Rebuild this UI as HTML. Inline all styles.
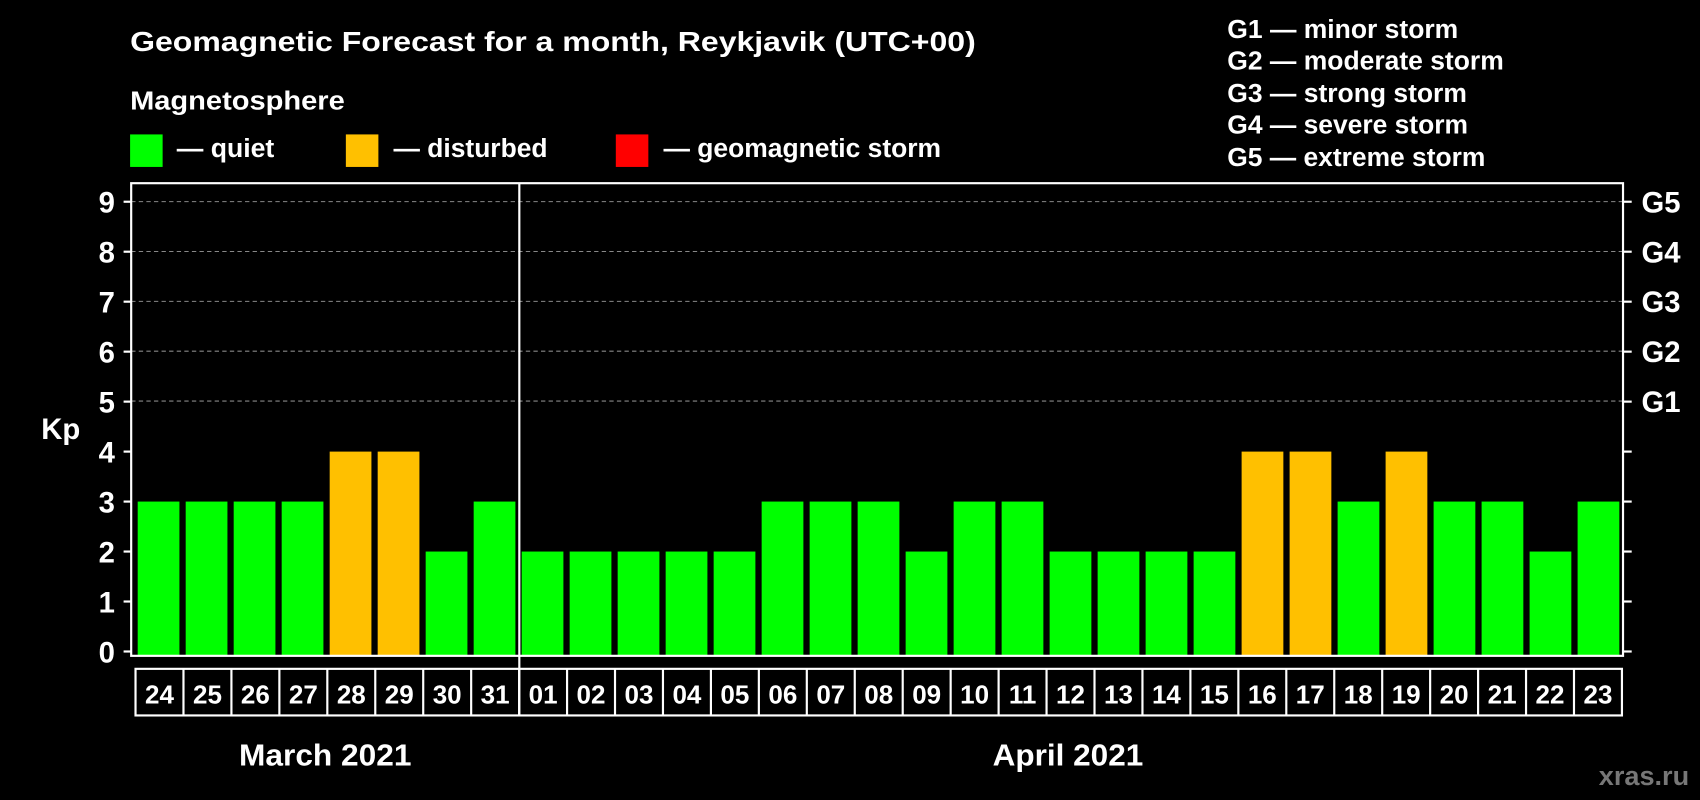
<!DOCTYPE html>
<html><head><meta charset="utf-8"><style>
html,body{margin:0;padding:0;background:#000;width:1700px;height:800px;overflow:hidden}
svg{display:block}
text{font-family:"Liberation Sans",Arial,sans-serif;font-weight:bold;fill:#fff}
</style></head><body>
<svg width="1700" height="800" viewBox="0 0 1568 738" preserveAspectRatio="none" xmlns="http://www.w3.org/2000/svg">
<rect width="1568" height="738" fill="#000"/>
<text x="120" y="47" font-size="26" textLength="780" lengthAdjust="spacingAndGlyphs">Geomagnetic Forecast for a month, Reykjavik (UTC+00)</text>
<text x="120" y="101" font-size="24" textLength="198" lengthAdjust="spacingAndGlyphs">Magnetosphere</text>
<rect x="120" y="124" width="30" height="30" fill="#00ff00"/>
<text x="163" y="145" font-size="24" textLength="90" lengthAdjust="spacingAndGlyphs">— quiet</text>
<rect x="319" y="124" width="30" height="30" fill="#ffc000"/>
<text x="363" y="145" font-size="24" textLength="142" lengthAdjust="spacingAndGlyphs">— disturbed</text>
<rect x="568" y="124" width="30" height="30" fill="#ff0000"/>
<text x="612" y="145" font-size="24" textLength="256" lengthAdjust="spacingAndGlyphs">— geomagnetic storm</text>
<g font-size="24">
<text x="1132" y="35" textLength="213" lengthAdjust="spacingAndGlyphs">G1 — minor storm</text>
<text x="1132" y="64" textLength="255" lengthAdjust="spacingAndGlyphs">G2 — moderate storm</text>
<text x="1132" y="94" textLength="221" lengthAdjust="spacingAndGlyphs">G3 — strong storm</text>
<text x="1132" y="123" textLength="222" lengthAdjust="spacingAndGlyphs">G4 — severe storm</text>
<text x="1132" y="153" textLength="238" lengthAdjust="spacingAndGlyphs">G5 — extreme storm</text>
</g>
<g id="grid" stroke="#888" stroke-width="1" stroke-dasharray="4,3">
<line x1="121" x2="1497" y1="186" y2="186"/>
<line x1="121" x2="1497" y1="232" y2="232"/>
<line x1="121" x2="1497" y1="278" y2="278"/>
<line x1="121" x2="1497" y1="324" y2="324"/>
<line x1="121" x2="1497" y1="370" y2="370"/>
</g>
<g id="bars"></g>
<rect x="121" y="169" width="1376" height="436" fill="none" stroke="#fff" stroke-width="2"/>
<line x1="479" y1="169" x2="479" y2="660" stroke="#fff" stroke-width="2"/>
<g id="ticks" stroke="#fff" stroke-width="2"></g>
<g id="labels"></g>
<text x="38" y="405" font-size="27">Kp</text>
<g font-size="27">
<text x="1514" y="196">G5</text>
<text x="1514" y="242">G4</text>
<text x="1514" y="288">G3</text>
<text x="1514" y="334">G2</text>
<text x="1514" y="380">G1</text>
</g>
<rect x="125" y="617" width="1371" height="43" fill="none" stroke="#fff" stroke-width="2"/>
<g id="cells"></g>
<text x="300" y="706" font-size="28" text-anchor="middle" textLength="159" lengthAdjust="spacingAndGlyphs">March 2021</text>
<text x="985" y="706" font-size="28" text-anchor="middle" textLength="139" lengthAdjust="spacingAndGlyphs">April 2021</text>
<text x="1558" y="724" font-size="25" text-anchor="end" style="fill:#777">xras.ru</text>
</svg>
<script>
(function(){
var ns="http://www.w3.org/2000/svg";
var vals=[3,3,3,3,4,4,2,3,2,2,2,2,2,3,3,3,2,3,3,2,2,2,2,4,4,3,4,3,3,2,3];
var days=["24","25","26","27","28","29","30","31","01","02","03","04","05","06","07","08","09","10","11","12","13","14","15","16","17","18","19","20","21","22","23"];
function el(t,a,p,txt){var e=document.createElementNS(ns,t);for(var k in a)e.setAttribute(k,a[k]);if(txt!==undefined)e.textContent=txt;document.getElementById(p).appendChild(e);}
var step=44.27,y0=601,dy=46.1;
for(var i=0;i<31;i++){var x=127+i*step,v=vals[i],ty=y0-v*dy;
el("rect",{x:x,y:ty,width:38.5,height:605-ty,fill:v>=4?"#ffc000":"#00ff00"},"bars");
var cx=125+i*(1371/31);
if(i>0)el("line",{x1:cx,y1:617,x2:cx,y2:660,stroke:"#fff","stroke-width":2},"cells");
el("text",{x:cx+1371/62,y:649,"font-size":"24","text-anchor":"middle"},"cells",days[i]);}
for(var k=0;k<=9;k++){var y=y0-k*dy;
el("line",{x1:114,y1:y,x2:121,y2:y},"ticks");
el("line",{x1:1497,y1:y,x2:1505,y2:y},"ticks");
el("text",{x:106,y:y+10,"font-size":"27","text-anchor":"end"},"labels",String(k));}
})();
</script>
</body></html>
